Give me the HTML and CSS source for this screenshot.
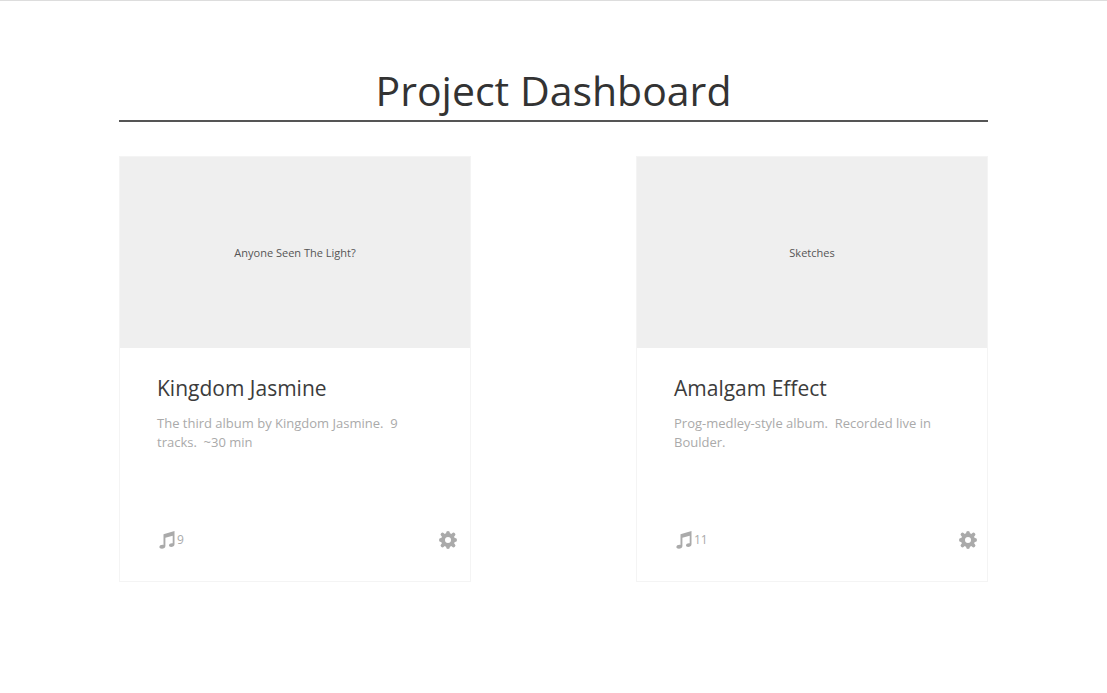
FILE: index.html
```
<!DOCTYPE html>
<html lang="en">
<head>
<meta charset="utf-8">
<title>Project Dashboard</title>
<link rel="stylesheet" href="styles.css">
</head>
<body>
<svg class="sprite" aria-hidden="true">
  <symbol id="music" viewBox="0 0 16 18">
    <path d="M4.500 3.200 15.500 0V13.200C15.500 15 13.800 15.900 12.200 15.900C10.800 15.900 10 15.200 10 14.300C10 12.900 11.700 11.900 13.700 12.200V4.700L6.400 6.700V14.900C6.400 16.600 4.700 17.700 2.900 17.700C1.300 17.700 .4 17 .4 16C.4 14.600 2.200 13.600 4.500 13.900Z"/>
  </symbol>
  <symbol id="gear" viewBox="0 0 18 18">
    <circle cx="9" cy="9" r="5" fill="none" stroke="#aaa" stroke-width="4"/>
    <path fill="none" stroke="#aaa" stroke-width="3.800" stroke-linecap="round" d="M9 1.900v1.600M9 14.500v1.600M1.900 9h1.600M14.500 9h1.600M3.500 3.500l1.600 1.600M12.900 12.900l1.600 1.600M3.500 14.500l1.600-1.600M12.900 5.100l1.600-1.600"/>
  </symbol>
</svg>
<main class="page">
  <h1 class="title">Project Dashboard</h1>
  <div class="cards">
    <article class="card">
      <div class="cover">Anyone Seen The Light?</div>
      <div class="body">
        <h2 class="name">Kingdom Jasmine</h2>
        <p class="about">The third album by Kingdom Jasmine.&nbsp; 9 tracks.&nbsp; ~30 min</p>
      </div>
      <footer class="foot">
        <span class="count"><svg class="note" aria-hidden="true"><use href="#music"/></svg>9</span>
        <button class="settings" type="button" aria-label="Settings"><svg class="gear" aria-hidden="true"><use href="#gear"/></svg></button>
      </footer>
    </article>
    <article class="card card-flush">
      <div class="cover">Sketches</div>
      <div class="body">
        <h2 class="name">Amalgam Effect</h2>
        <p class="about">Prog-medley-style album.&nbsp; Recorded live in Boulder.</p>
      </div>
      <footer class="foot">
        <span class="count"><svg class="note" aria-hidden="true"><use href="#music"/></svg>11</span>
        <button class="settings" type="button" aria-label="Settings"><svg class="gear" aria-hidden="true"><use href="#gear"/></svg></button>
      </footer>
    </article>
  </div>
</main>
</body>
</html>
```
FILE: styles.css
```
* { box-sizing: border-box; }
body { margin: 0; border-top: 1px solid #ddd; background: #fff; color: #333; font-family: "Open Sans", sans-serif; }
.sprite { display: none; }
.page { max-width: 869px; margin: 0 auto; padding-top: 59px; }
.title { margin: 0; border-bottom: 2px solid #555; font-size: 41px; font-weight: 400; line-height: 60px; text-align: center; }
.cards { display: flex; justify-content: space-between; gap: 32px; padding-top: 34px; }
.card { display: flex; flex-direction: column; width: 352px; min-height: 426px; border: 1px solid #f4f4f4; }
.cover { display: flex; align-items: center; justify-content: center; height: 191px; background: #efefef; color: #555; font-size: 11px; }
.body { flex: 1; padding: 24px 37px 0; }
.name { margin: 0; color: #3c3c3c; font-size: 21px; font-weight: 400; line-height: 32px; }
.about { margin: 10px 0 0; color: #aaa; font-size: 13px; line-height: 19px; }
.foot { display: flex; align-items: center; justify-content: space-between; padding: 0 13px 32px 39px; color: #aaa; }
.card-flush .foot { padding-right: 10px; }
.count { display: flex; align-items: center; gap: 2px; font-size: 12px; line-height: 18px; }
.note { width: 16px; height: 18px; fill: #aaa; }
.settings { display: flex; padding: 0; border: 0; background: none; cursor: pointer; }
.gear { width: 18px; height: 18px; }
```
